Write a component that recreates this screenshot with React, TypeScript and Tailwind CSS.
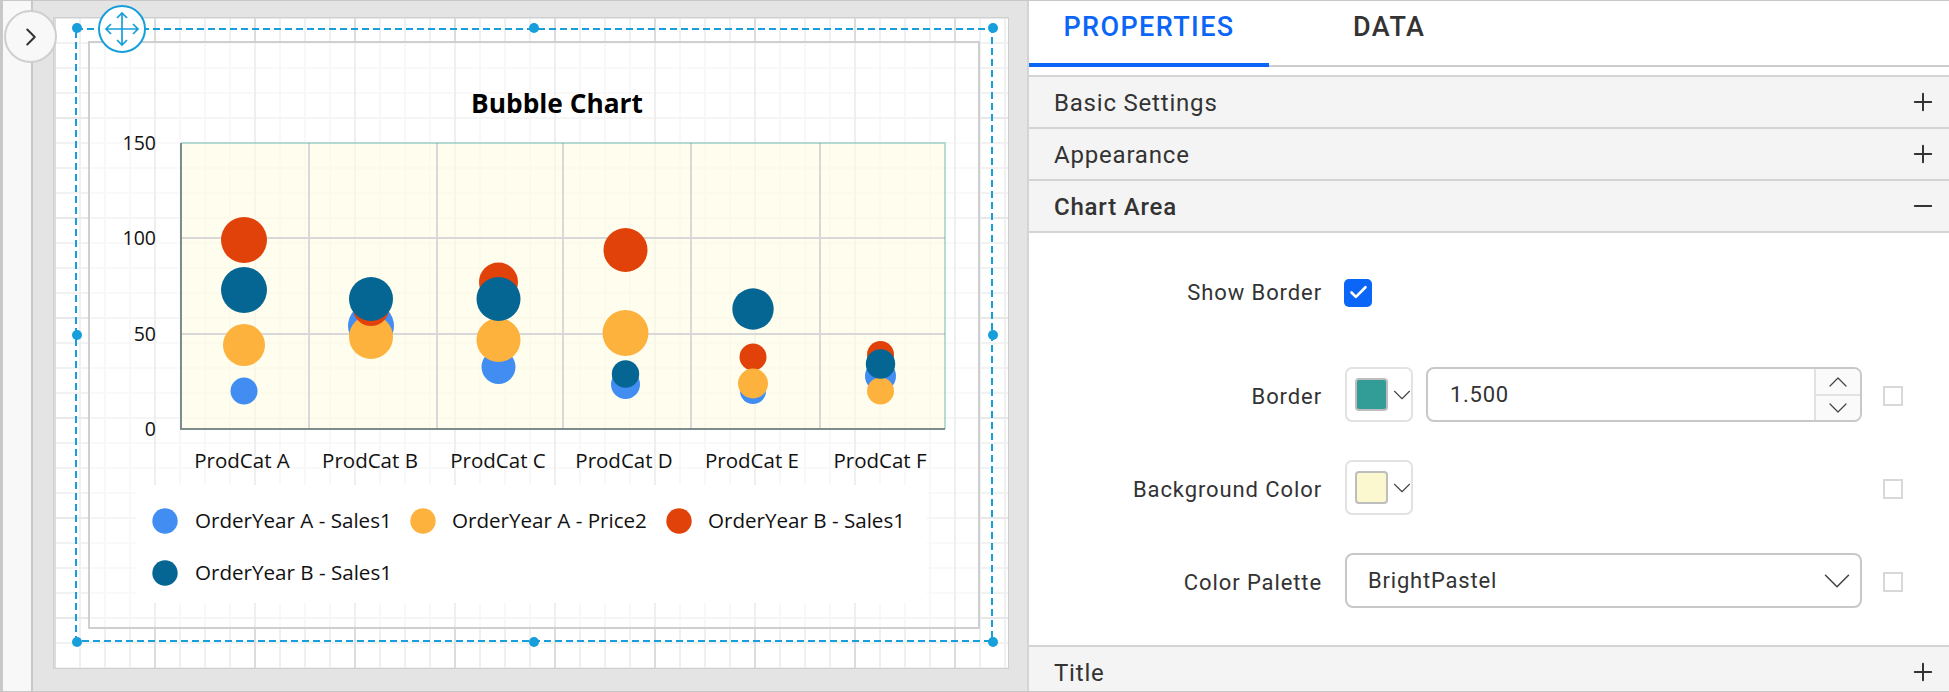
import { Check, ChevronDown, ChevronRight, ChevronUp, Minus, Plus } from "lucide-react";

const segoe = { fontFamily: "'Open Sans', sans-serif" };

const PLOT = { left: 181, top: 143, right: 945, bottom: 429 };

const bubbleColors = {
  blue: "#428df2",
  orange: "#fdb23e",
  red: "#e1420a",
  navy: "#056694",
};

const bubbles: { x: number; y: number; r: number; color: string }[] = [
  { x: 244, y: 391, r: 13.5, color: bubbleColors.blue },
  { x: 244, y: 345, r: 21, color: bubbleColors.orange },
  { x: 244, y: 240, r: 23, color: bubbleColors.red },
  { x: 244, y: 290, r: 23, color: bubbleColors.navy },
  { x: 371, y: 326, r: 23, color: bubbleColors.blue },
  { x: 371, y: 337, r: 22, color: bubbleColors.orange },
  { x: 371, y: 308, r: 18, color: bubbleColors.red },
  { x: 371, y: 299, r: 22, color: bubbleColors.navy },
  { x: 498.5, y: 367, r: 17, color: bubbleColors.blue },
  { x: 498.5, y: 340, r: 22, color: bubbleColors.orange },
  { x: 498.5, y: 282, r: 19.5, color: bubbleColors.red },
  { x: 498.5, y: 299, r: 22, color: bubbleColors.navy },
  { x: 625.5, y: 384.5, r: 14.5, color: bubbleColors.blue },
  { x: 625.5, y: 333, r: 23, color: bubbleColors.orange },
  { x: 625.5, y: 250, r: 22, color: bubbleColors.red },
  { x: 625.5, y: 374, r: 13.7, color: bubbleColors.navy },
  { x: 753, y: 391, r: 13, color: bubbleColors.blue },
  { x: 753, y: 357, r: 13.5, color: bubbleColors.red },
  { x: 753, y: 383.5, r: 15, color: bubbleColors.orange },
  { x: 753, y: 309, r: 20.7, color: bubbleColors.navy },
  { x: 880.5, y: 376, r: 15.5, color: bubbleColors.blue },
  { x: 880.5, y: 354.5, r: 13.5, color: bubbleColors.red },
  { x: 880.5, y: 391, r: 13.5, color: bubbleColors.orange },
  { x: 880.5, y: 364, r: 14.7, color: bubbleColors.navy },
];

const yTicks = [
  { label: "150", y: 143 },
  { label: "100", y: 238 },
  { label: "50", y: 334 },
  { label: "0", y: 429 },
];

const xTicks = [
  { label: "ProdCat A", x: 242 },
  { label: "ProdCat B", x: 370 },
  { label: "ProdCat C", x: 498 },
  { label: "ProdCat D", x: 624 },
  { label: "ProdCat E", x: 752 },
  { label: "ProdCat F", x: 880 },
];

const legend = [
  { label: "OrderYear A - Sales1", color: bubbleColors.blue, cx: 29, tx: 59, y: 36 },
  { label: "OrderYear A - Price2", color: bubbleColors.orange, cx: 287, tx: 316, y: 36 },
  { label: "OrderYear B - Sales1", color: bubbleColors.red, cx: 543, tx: 572, y: 36 },
  { label: "OrderYear B - Sales1", color: bubbleColors.navy, cx: 29, tx: 59, y: 88 },
];

function BubbleChart() {
  return (
    <svg viewBox="88 41 892 588" className="absolute left-[34px] top-[23px] h-[588px] w-[892px]">
      <rect x="89" y="42" width="890" height="586" fill="#ffffff" fillOpacity="0.55" stroke="#cfcfcf" strokeWidth="2" />
      <text x="557" y="113" textAnchor="middle" fontSize="26.3" fontWeight="700" fill="#000" style={segoe}>
        Bubble Chart
      </text>
      <rect x={PLOT.left} y={PLOT.top} width={PLOT.right - PLOT.left} height={PLOT.bottom - PLOT.top} fill="#fffde0" fillOpacity="0.55" />
      {[309, 437, 563, 691, 820].map((x) => (
        <line key={x} x1={x} x2={x} y1={PLOT.top} y2={PLOT.bottom} stroke="#d8d8d8" strokeWidth="2" />
      ))}
      {[238, 334].map((y) => (
        <line key={y} x1={PLOT.left} x2={PLOT.right} y1={y} y2={y} stroke="#d8d8d8" strokeWidth="2" />
      ))}
      <path d={`M${PLOT.left} ${PLOT.top}H${PLOT.right}V${PLOT.bottom}`} fill="none" stroke="#329c96" strokeOpacity="0.35" strokeWidth="2" />
      <path d={`M${PLOT.left} ${PLOT.top}V${PLOT.bottom}H${PLOT.right}`} fill="none" stroke="#7f8c8c" strokeWidth="2" />
      {bubbles.map((b, i) => (
        <circle key={i} cx={b.x} cy={b.y} r={b.r} fill={b.color} />
      ))}
      {yTicks.map((t) => (
        <text key={t.label} x="156" y={t.y + 7} textAnchor="end" fontSize="19.5" fill="#111" style={segoe}>
          {t.label}
        </text>
      ))}
      {xTicks.map((t) => (
        <text key={t.label} x={t.x} y="468" textAnchor="middle" fontSize="20.5" fill="#111" style={segoe}>
          {t.label}
        </text>
      ))}
    </svg>
  );
}

function Legend() {
  return (
    <svg viewBox="0 0 791 118" className="absolute left-[82px] top-[467px] h-[118px] w-[791px] bg-white">
      {legend.map((item) => (
        <g key={item.color}>
          <circle cx={item.cx} cy={item.y} r="12.7" fill={item.color} />
          <text x={item.tx} y={item.y + 7} fontSize="20.6" fill="#111" style={segoe}>
            {item.label}
          </text>
        </g>
      ))}
    </svg>
  );
}

function Selection() {
  const handles = [
    [77, 28],
    [534, 28],
    [993, 28],
    [77, 335],
    [993, 335],
    [77, 642],
    [534, 642],
    [993, 642],
  ];
  return (
    <svg viewBox="54 18 955 650" className="absolute left-0 top-0 h-[650px] w-[955px] overflow-visible">
      <rect x="76" y="29" width="916" height="612" fill="none" stroke="#179fdb" strokeWidth="2" strokeDasharray="7 4" />
      {handles.map(([x, y]) => (
        <circle key={`${x}-${y}`} cx={x} cy={y} r="5" fill="#179fdb" />
      ))}
      <circle cx="122" cy="29" r="23" fill="#fff" stroke="#179fdb" strokeWidth="2" />
      <path
        d="M106 29H138M122 13V45M111 24l-5 5 5 5M133 24l5 5-5 5M117 18l5-5 5 5M117 40l5 5 5-5"
        fill="none"
        stroke="#179fdb"
        strokeWidth="1.7"
      />
    </svg>
  );
}

function AccordionHeader({ title, open, active }: { title: string; open?: boolean; active?: boolean }) {
  return (
    <div className="flex h-[52px] items-center justify-between border-t-2 border-[#d4d4d4] bg-[#f4f4f4] pl-[25px] pr-[12px]">
      <span className={`pt-[2px] text-[24px] tracking-[0.8px] text-[#333] ${active ? "font-medium" : ""}`}>{title}</span>
      {open ? <Minus size={28} strokeWidth={1.7} color="#333" /> : <Plus size={28} strokeWidth={1.7} color="#333" />}
    </div>
  );
}

function ColorPicker({ color }: { color: string }) {
  return (
    <div className="flex h-[55px] w-[68px] items-center rounded-[7px] border-2 border-[#e2e2e2] pl-[8px]">
      <div className="h-[33px] w-[33px] shrink-0 rounded-[4px] border-2 border-[#bdbdbd]" style={{ backgroundColor: color }} />
      <ChevronDown size={30} strokeWidth={0.9} color="#444" className="-ml-px shrink-0" />
    </div>
  );
}

function PropertyRow({ label, children, box = true }: { label: string; children: React.ReactNode; box?: boolean }) {
  return (
    <div className="flex h-[55px] items-center">
      <span className={`w-[293px] text-right text-[22px] tracking-[0.9px] text-[#333] ${box ? "pt-[4px]" : ""}`}>{label}</span>
      <div className="ml-[23px] w-[517px]">{children}</div>
      <div className={`ml-[21px] mt-[3px] h-[20px] w-[20px] border-2 border-[#d8d8d8] ${box ? "" : "hidden"}`} />
    </div>
  );
}

export default function App() {
  return (
    <div className="flex h-[692px] w-[1949px] overflow-hidden border-y border-[#c8c8c8]" style={{ fontFamily: "Roboto, sans-serif" }}>
      {/* designer side */}
      <div className="relative flex w-[1027px] shrink-0">
        <div className="w-[33px] border-l-[3px] border-r-2 border-[#c8c8c8] bg-[#f8f8f8]" />
        <div className="flex-1 bg-[#e4e4e4] pl-[20px] pt-[16px]">
          <div className="relative h-[652px] w-[956px] border border-[#cfcfcf] bg-white [background-image:linear-gradient(to_right,#dcdcdc_2px,transparent_2px),linear-gradient(to_bottom,#e8e8e8_2px,transparent_2px),linear-gradient(to_right,#f0f0f0_2px,transparent_2px),linear-gradient(to_bottom,#f2f2f2_2px,transparent_2px)] [background-position:0_-1px] [background-size:100px_100px,100px_100px,25px_25px,25px_25px]">
            <BubbleChart />
            <Legend />
            <Selection />
          </div>
        </div>
        <button className="absolute left-[4px] top-[9px] flex h-[53px] w-[53px] items-center justify-center rounded-full border-2 border-[#cfcfcf] bg-[#f8f8f8]">
          <ChevronRight size={30} strokeWidth={1.6} color="#333" />
        </button>
      </div>

      {/* properties side */}
      <div className="flex flex-1 flex-col border-l-2 border-[#d4d4d4] bg-white">
        <div className="flex h-[66px] shrink-0 shadow-[inset_0_-2px_0_#cccccc]">
          <div className="flex h-[66px] w-[240px] justify-center border-b-4 border-[#0b66f7] pt-[6px] text-[27px] font-medium tracking-[1.4px] text-[#0b66f7]">
            PROPERTIES
          </div>
          <div className="pl-[84px] pt-[6px] text-[27px] font-medium tracking-[1.4px] text-[#333]">DATA</div>
        </div>
        <div className="mt-[8px]">
          <AccordionHeader title="Basic Settings" />
          <AccordionHeader title="Appearance" />
          <AccordionHeader title="Chart Area" open active />
          <div className="flex h-[414px] flex-col gap-[38px] border-t-2 border-[#d4d4d4] pt-[32px]">
            <div className="mb-[9px]">
              <PropertyRow label="Show Border" box={false}>
                <div className="-ml-px flex h-[28px] w-[28px] items-center justify-center rounded-[5px] bg-[#0b66f7]">
                  <Check size={21} strokeWidth={3} color="#fff" />
                </div>
              </PropertyRow>
            </div>
            <PropertyRow label="Border">
              <div className="flex items-center gap-[13px]">
                <ColorPicker color="#329c96" />
                <div className="flex h-[55px] flex-1 items-center justify-between overflow-hidden rounded-[8px] border-2 border-[#c8c8c8] pl-[22px] text-[22px] tracking-[0.7px] text-[#333]">
                  <span>1.500</span>
                  <div className="flex h-full w-[46px] flex-col border-l-2 border-[#e2e2e2] bg-[#fafafa]">
                    <div className="flex h-[27px] items-center justify-center border-b-2 border-[#e2e2e2]">
                      <ChevronUp size={32} strokeWidth={0.9} color="#444" className="shrink-0" />
                    </div>
                    <div className="flex h-[24px] items-center justify-center">
                      <ChevronDown size={32} strokeWidth={0.9} color="#444" className="shrink-0" />
                    </div>
                  </div>
                </div>
              </div>
            </PropertyRow>
            <PropertyRow label="Background Color">
              <ColorPicker color="#fbf7cf" />
            </PropertyRow>
            <PropertyRow label="Color Palette">
              <div className="flex h-[55px] items-center justify-between rounded-[8px] border-2 border-[#c8c8c8] pl-[21px] text-[22px] tracking-[0.8px] text-[#333]">
                <span>BrightPastel</span>
                <ChevronDown size={46} strokeWidth={0.8} color="#444" className="shrink-0" />
              </div>
            </PropertyRow>
          </div>
          <AccordionHeader title="Title" />
        </div>
      </div>
    </div>
  );
}
